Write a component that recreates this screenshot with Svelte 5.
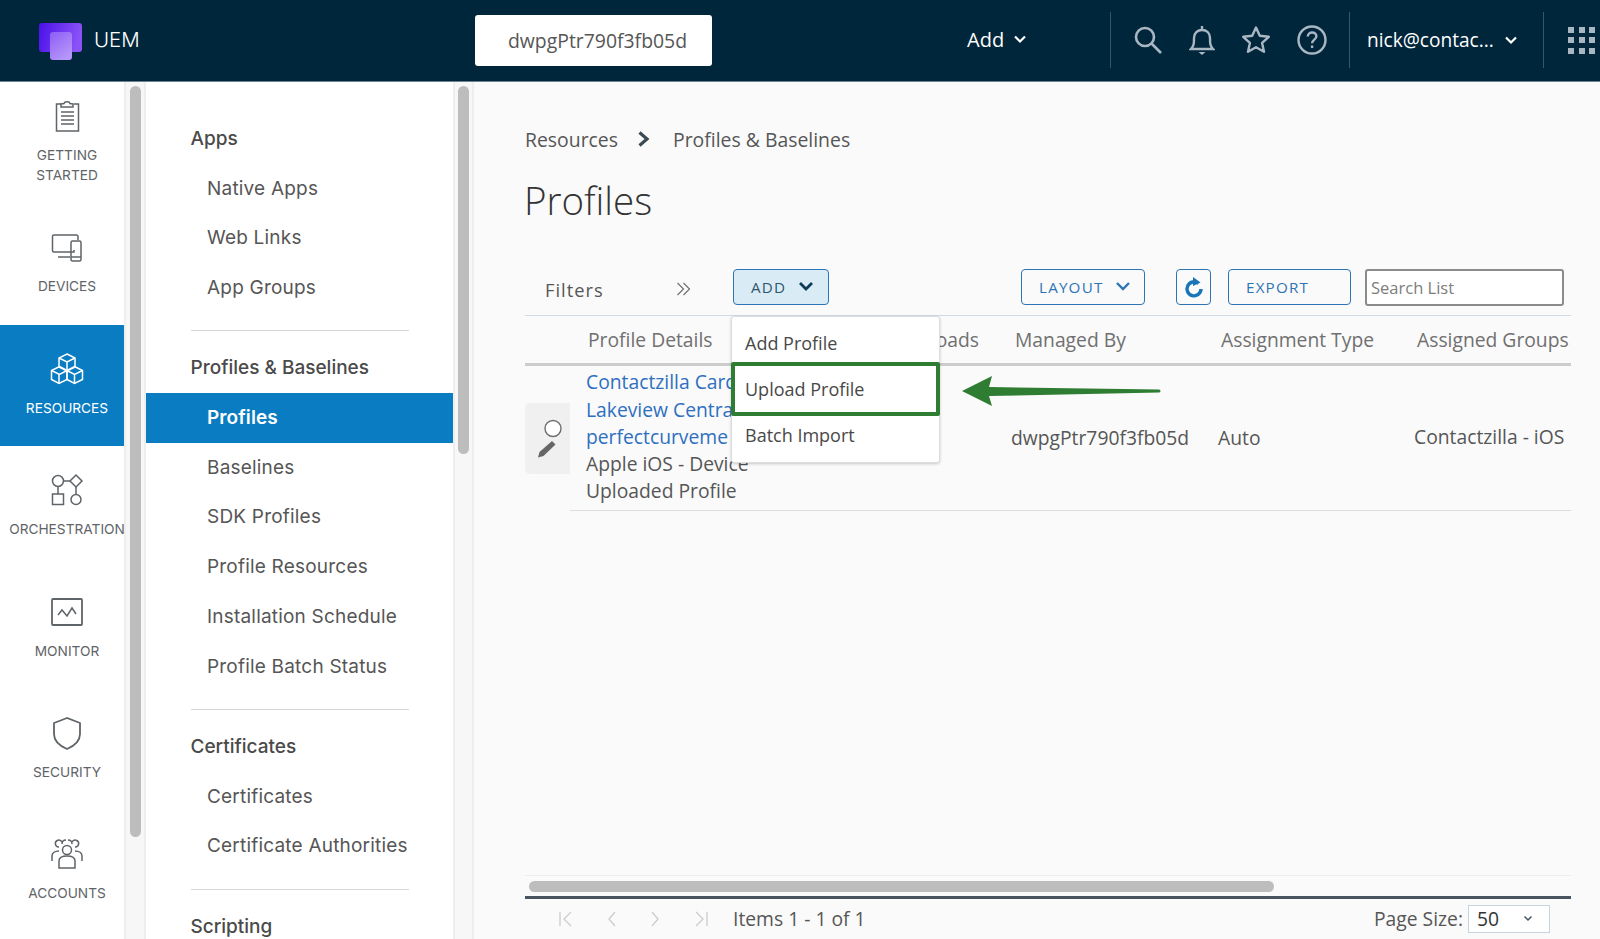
<script lang="ts">
const railItems = [
  { id: "start", label: ["GETTING", "STARTED"] },
  { id: "devices", label: ["DEVICES"] },
  { id: "resources", label: ["RESOURCES"], active: true },
  { id: "orchestration", label: ["ORCHESTRATION"] },
  { id: "monitor", label: ["MONITOR"] },
  { id: "security", label: ["SECURITY"] },
  { id: "accounts", label: ["ACCOUNTS"] }
];

const groups = [
  { title: "Apps", links: ["Native Apps", "Web Links", "App Groups"] },
  {
    title: "Profiles & Baselines",
    links: ["Profiles", "Baselines", "SDK Profiles", "Profile Resources", "Installation Schedule", "Profile Batch Status"]
  },
  { title: "Certificates", links: ["Certificates", "Certificate Authorities"] },
  { title: "Scripting", links: [] }
];
</script>

<div class="app">
  <header class="topbar">
    <div class="brand">
      <svg class="logo" width="44" height="38" viewBox="0 0 44 38">
        <defs>
          <linearGradient id="lg1" x1="0" y1="0" x2="1" y2="0.2">
            <stop offset="0" stop-color="#4a10e8" />
            <stop offset="1" stop-color="#8a52f7" />
          </linearGradient>
          <linearGradient id="lg2" x1="0" y1="0" x2="0.6" y2="1">
            <stop offset="0" stop-color="#8f5cf6" />
            <stop offset="1" stop-color="#b596fa" />
          </linearGradient>
        </defs>
        <rect x="0" y="0" width="43" height="29" rx="3" fill="url(#lg1)" />
        <rect x="11" y="9" width="22" height="28" rx="3" fill="url(#lg2)" />
      </svg>
      <span class="uem">UEM</span>
    </div>
    <div class="org">dwpgPtr790f3fb05d</div>
    <div class="add-menu">
      Add
      <svg width="14" height="10" viewBox="0 0 14 10" fill="none" stroke="#fff" stroke-width="2.2"><path d="M2 2.5l5 5 5-5" /></svg>
    </div>
    <div class="top-right">
      <div class="sep"></div>
      <div class="top-icons">
        <svg width="30" height="30" viewBox="0 0 30 30" fill="none" stroke="#a9b7c2" stroke-width="2.6"><circle cx="12" cy="12" r="9" /><path d="M18.5 18.5L28 28" /></svg>
        <svg width="26" height="32" viewBox="0 0 26 32" fill="none" stroke="#a9b7c2" stroke-width="2.4"><path d="M2 25c3-3 3-6 3-11 0-5 3.500-8 8-8s8 3 8 8c0 5 0 8 3 11z" /><path d="M13 2v4" /><path d="M9.500 28h7l-3.500 3z" fill="#a9b7c2" stroke="none" /></svg>
        <svg width="30" height="30" viewBox="0 0 30 30" fill="none" stroke="#a9b7c2" stroke-width="2.4" stroke-linejoin="round"><path d="M15 2.500l3.800 8.300 9 1-6.700 6.100 1.900 8.900L15 22.300l-8 4.500 1.900-8.900-6.700-6.100 9-1z" /></svg>
        <svg width="30" height="30" viewBox="0 0 30 30" fill="none" stroke="#a9b7c2" stroke-width="2.4"><circle cx="15" cy="15" r="13.500" /><path d="M10.800 11.500c0-2.500 2-4 4.300-4s4.300 1.500 4.300 3.800c0 3.400-4.300 3.400-4.300 7" /><path d="M15.100 20.500v2.500" /></svg>
      </div>
      <div class="sep"></div>
      <div class="user">
        nick@contac...
        <svg width="14" height="10" viewBox="0 0 14 10" fill="none" stroke="#fff" stroke-width="2.2"><path d="M2 2.500l5 5 5-5" /></svg>
      </div>
      <div class="sep"></div>
      <div class="apps-grid">
        {#each Array(9) as _}<span></span>{/each}
      </div>
    </div>
  </header>

  <div class="body">
    <nav class="rail">
      {#each railItems as item (item.id)}
        <div class="rail-item" class:active={item.active}>
          <svg class="rail-icon" width="34" height="34" viewBox="0 0 34 34" fill="none" stroke="currentColor" stroke-width="1.5">
            {#if item.id === "start"}
              <path d="M11 5H6.500v27h22V5H24" />
              <path d="M11 8V5l3-.5c.5-2.500 5.500-2.500 6 0l3 .5v3z" />
              <path d="M11 13h13M11 17h13M11 21h13M11 25h13" stroke-width="1.700" />
            {:else if item.id === "devices"}
              <path d="M24 20V22H4a1.500 1.500 0 0 1-1.500-1.500V6.500A1.500 1.500 0 0 1 4 5h22.500A1.500 1.500 0 0 1 28 6.500V10" />
              <path d="M8 27h12" />
              <rect x="21" y="11" width="10" height="20" rx="1.500" />
              <path d="M21 27h10" />
            {:else if item.id === "resources"}
              <path d="M17 2l8 4v9l-8 4-8-4V6z" />
              <path d="M9 6l8 4 8-4M17 10v9" />
              <path d="M9.500 14.500l7.500 4v9l-8 4-7.500-4v-9z" />
              <path d="M1.500 18.500l8 4 7.500-4M9 22.500v9" />
              <path d="M24.500 14.500l8 4v9l-8 4-7.500-4v-9z" />
              <path d="M17 18.500l7.500 4 8-4M24.500 22.500v9" />
            {:else if item.id === "orchestration"}
              <circle cx="8" cy="8" r="5.500" />
              <path d="M26 2l6 6-6 6-6-6z" />
              <rect x="2.500" y="21" width="11" height="10.500" />
              <circle cx="26" cy="26.500" r="5" />
              <path d="M13.500 8H20M8 13.500V21M26 14v7.500" />
            {:else if item.id === "monitor"}
              <rect x="2" y="4" width="30" height="26" rx="1" stroke-width="1.800" />
              <path d="M8 20l4-5 5 6 5-8 4 6" />
            {:else if item.id === "security"}
              <path d="M17 2L4 7v11c0 7 6 12 13 15 7-3 13-8 13-15V7z" stroke-width="1.800" />
            {:else}
              <circle cx="17" cy="13" r="4.500" />
              <path d="M9 31v-7c0-3 3-5 8-5s8 2 8 5v7z" />
              <path d="M12 7c0-3 2-4 4-4M22 7c0-3-2-4-4-4" />
              <path d="M9 10a3.500 3.500 0 1 1 3-5M25 10a3.500 3.500 0 1 0-3-5" />
              <path d="M2 24v-5c0-3 3-5 7-5M32 24v-5c0-3-3-5-7-5" />
            {/if}
          </svg>
          <div class="rail-label">
            {#each item.label as line}<div>{line}</div>{/each}
          </div>
        </div>
      {/each}
    </nav>
    <div class="gutter wide"><div class="thumb rail-thumb"></div></div>

    <aside class="sidebar">
      {#each groups as group, i}
        {#if i > 0}<hr />{/if}
        <h3>{group.title}</h3>
        {#each group.links as link}
          <div class="side-link" class:active={link === "Profiles"}>{link}</div>
        {/each}
      {/each}
    </aside>
    <div class="gutter"><div class="thumb side-thumb"></div></div>

    <main class="main">
      <div class="crumbs">
        <span>Resources</span>
        <svg width="14" height="18" viewBox="0 0 14 18" fill="none" stroke="#3c4a54" stroke-width="3.200"><path d="M2.500 2.500L10 9l-7.500 6.500" /></svg>
        <span class="crumb-last">Profiles &amp; Baselines</span>
      </div>
      <h1>Profiles</h1>

      <div class="toolbar">
        <div class="filters">Filters</div>
        <svg class="dbl" width="15" height="14" viewBox="0 0 15 14" fill="none" stroke="#707070" stroke-width="1.200"><path d="M1.500 1l6 6-6 6M7.500 1l6 6-6 6" /></svg>
        <div class="add-wrap">
          <button class="btn add">
            ADD
            <svg width="16" height="11" viewBox="0 0 16 11" fill="none" stroke="#0d3a55" stroke-width="2.800"><path d="M2 2l6 6 6-6" /></svg>
          </button>
          <div class="menu">
            <div class="menu-item">Add Profile</div>
            <div class="menu-item picked">Upload Profile</div>
            <div class="menu-item">Batch Import</div>
          </div>
        </div>
        <button class="btn layout">
          LAYOUT
          <svg width="16" height="11" viewBox="0 0 16 11" fill="none" stroke="#2d74b5" stroke-width="2.400"><path d="M2 2l6 6 6-6" /></svg>
        </button>
        <button class="btn refresh" aria-label="Refresh">
          <svg width="20" height="24" viewBox="0 0 20 24" fill="none" stroke="#1a75b8" stroke-width="3.400"><path d="M14.500 8.500a7 7 0 1 0 2.500 5.500" /><path d="M9 2l7.500 5.500L9 11z" fill="#1a75b8" stroke="none" /></svg>
        </button>
        <button class="btn export">EXPORT</button>
        <div class="search">Search List</div>
      </div>

      <div class="thead">
        <div></div>
        <div>Profile Details</div>
        <div class="right">Payloads</div>
        <div class="off">Managed By</div>
        <div class="off">Assignment Type</div>
        <div class="off">Assigned Groups</div>
      </div>

      <div class="row">
        <div class="tile">
          <svg width="30" height="42" viewBox="0 0 30 42" fill="none">
            <circle cx="20" cy="11.500" r="8" fill="#fff" stroke="#6e6e6e" stroke-width="1.400" />
            <path d="M19 24l3.500 3.500-12 11.500-5.500 1.500 1.500-5.500z" fill="#666" />
          </svg>
        </div>
        <div class="details">
          <div class="lnk">Contactzilla Card</div>
          <div class="lnk">Lakeview Central</div>
          <div class="lnk">perfectcurveme</div>
          <div>Apple iOS - Device</div>
          <div>Uploaded Profile</div>
        </div>
        <div></div>
        <div class="mid">dwpgPtr790f3fb05d</div>
        <div class="mid">Auto</div>
        <div class="mid up">Contactzilla - iOS</div>
      </div>

      <div class="spacer"></div>

      <div class="hscroll"><div class="thumb hthumb"></div></div>

      <footer class="pager">
        <div class="pages">
          <svg width="16" height="16" viewBox="0 0 16 16" fill="none" stroke="#c9cdd0" stroke-width="1.300"><path d="M2 1v14M13 1l-7 7 7 7" /></svg>
          <svg width="10" height="16" viewBox="0 0 10 16" fill="none" stroke="#c9cdd0" stroke-width="1.300"><path d="M8 1L2 8l6 7" /></svg>
          <svg width="10" height="16" viewBox="0 0 10 16" fill="none" stroke="#c9cdd0" stroke-width="1.300"><path d="M2 1l6 7-6 7" /></svg>
          <svg width="16" height="16" viewBox="0 0 16 16" fill="none" stroke="#c9cdd0" stroke-width="1.300"><path d="M14 1v14M3 1l7 7-7 7" /></svg>
        </div>
        <span class="items">Items 1 - 1 of 1</span>
        <span class="size-label">Page Size:</span>
        <div class="size">
          50
          <svg width="10" height="7" viewBox="0 0 10 7" fill="none" stroke="#44525c" stroke-width="1.500"><path d="M1.500 1.500L5 5l3.500-3.500" /></svg>
        </div>
      </footer>

      <svg class="arrow" width="200" height="32" viewBox="0 0 200 32">
        <path d="M0 16L30 1l-3 11 170 2.500a1.500 1.500 0 0 1 0 3L27 21l3 10z" fill="#2f7d32" />
      </svg>
    </main>
  </div>
</div>

<style>
  :global(body) {
    margin: 0;
    background: #fafafa;
  }

  .app {
    width: 1600px;
    height: 939px;
    overflow: hidden;
    display: flex;
    flex-direction: column;
    font-family: "Open Sans", "Noto Sans", sans-serif;
    color: #565656;
  }

  .topbar {
    height: 82px;
    flex: none;
    box-sizing: border-box;
    padding-bottom: 1px;
    border-bottom: 1px solid #6d8290;
    background: #00263b;
    display: flex;
    align-items: center;
    color: #fff;
    font-size: 20px;
  }

  .brand {
    width: 475px;
    flex: none;
    padding-left: 39px;
    box-sizing: border-box;
    display: flex;
    align-items: center;
    gap: 11px;
  }

  .logo {
    margin-top: 3px;
  }

  .uem {
    margin-bottom: 1px;
    font-family: Inter, sans-serif;
    font-size: 20.500px;
    font-weight: 300;
  }

  .org {
    width: 237px;
    height: 51px;
    flex: none;
    box-sizing: border-box;
    padding-left: 8px;
    background: #fff;
    border-radius: 3px;
    color: #565656;
    display: flex;
    align-items: center;
    justify-content: center;
    font-size: 19.400px;
  }

  .add-menu {
    margin: 0 0 2px 255px;
    display: flex;
    align-items: center;
    gap: 9px;
  }

  .top-right {
    margin-left: auto;
    display: flex;
    align-items: center;
    height: 100%;
  }

  .sep {
    width: 1px;
    height: 56px;
    background: #3a5566;
  }

  .top-icons {
    display: flex;
    align-items: center;
    gap: 26px;
    padding: 0 22px;
  }

  .user {
    width: 193px;
    box-sizing: border-box;
    padding-left: 17px;
    font-size: 19.100px;
    display: flex;
    align-items: center;
    gap: 10px;
  }

  .apps-grid {
    width: 28px;
    margin: 0 4px 0 24px;
    display: grid;
    grid-template-columns: repeat(3, 6px);
    gap: 4.5px;
  }

  .apps-grid span {
    height: 6px;
    background: #a9b7c2;
  }

  .body {
    flex: 1;
    min-height: 0;
    display: flex;
  }

  .rail {
    width: 124px;
    flex: none;
    background: #fff;
  }

  .rail-item {
    height: 121.400px;
    box-sizing: border-box;
    padding: 0 0 1px 10px;
    display: flex;
    flex-direction: column;
    align-items: center;
    justify-content: center;
    gap: 13px;
    color: #5f6468;
  }

  .rail-item.active {
    background: #0a7cc1;
    color: #fff;
  }

  .rail-label {
    font-family: Inter, sans-serif;
    font-size: 13.700px;
    line-height: 19.500px;
    text-align: center;
    white-space: nowrap;
  }

  .gutter {
    width: 21px;
    flex: none;
    box-sizing: border-box;
    padding-top: 4px;
    background: #f7f7f7;
    border-left: 2px solid #eee;
    border-right: 2px solid #eee;
    display: flex;
    justify-content: center;
  }

  .gutter.wide {
    width: 22px;
  }

  .thumb {
    width: 11px;
    border-radius: 6px;
    background: #bdbdbd;
  }

  .rail-thumb {
    height: 751px;
  }

  .side-thumb {
    height: 368px;
  }

  .sidebar {
    width: 307px;
    flex: none;
    box-sizing: border-box;
    padding-top: 32px;
    background: #fff;
    font-family: Inter, sans-serif;
    color: #565656;
    font-size: 19px;
  }

  .sidebar h3 {
    margin: 0 0 0 44.500px;
    height: 49.500px;
    line-height: 49.500px;
    font-size: 19px;
    font-weight: 500;
    color: #4a4a4a;
  }

  .sidebar hr {
    margin: 17.500px 45px 12px 45px;
    width: 218px;
    border: none;
    border-top: 1px solid #d8d8d8;
  }

  .side-link {
    height: 49.800px;
    line-height: 49.800px;
    padding-left: 61px;
    letter-spacing: 0.200px;
    white-space: nowrap;
  }

  .side-link.active {
    background: #0a7cc1;
    color: #fff;
    font-weight: 600;
    letter-spacing: 0.100px;
  }

  .main {
    flex: 1;
    min-width: 0;
    position: relative;
    display: flex;
    flex-direction: column;
    padding: 0 29px 0 51px;
    background: #fafafa;
  }

  .crumbs {
    margin-top: 43px;
    height: 28px;
    display: flex;
    align-items: center;
    gap: 19px;
    font-size: 19.400px;
    color: #565656;
  }

  .crumb-last {
    margin-left: 3px;
  }

  h1 {
    margin: 16px 0 0 -1px;
    height: 62px;
    line-height: 62px;
    font-size: 38.500px;
    font-weight: 300;
    color: #333;
  }

  .toolbar {
    margin-top: 38px;
    height: 46px;
    display: flex;
    align-items: flex-start;
    border-bottom: 1px solid #cfdde3;
  }

  .filters {
    margin: 8px 0 0 20px;
    width: 131px;
    font-size: 18.300px;
    letter-spacing: 1px;
  }

  .dbl {
    margin-top: 13px;
  }

  .add-wrap {
    position: relative;
    margin-left: 42px;
  }

  .btn {
    height: 36px;
    box-sizing: border-box;
    border: 1.500px solid #2d74b5;
    border-radius: 4px;
    background: #fafafa;
    color: #2d74b5;
    font-family: inherit;
    font-size: 15.200px;
    letter-spacing: 1.200px;
    display: flex;
    align-items: center;
    padding: 0 17px 1px;
    gap: 12px;
  }

  .btn svg {
    flex: none;
  }

  .add {
    width: 96px;
    background: #d9ecf6;
    color: #30566e;
  }

  .layout {
    width: 124px;
    margin-left: 192px;
  }

  .refresh {
    width: 35px;
    margin-left: 31px;
    padding: 0;
    justify-content: center;
  }

  .export {
    width: 123px;
    margin-left: 17px;
  }

  .search {
    width: 199px;
    height: 37px;
    margin-left: 14px;
    box-sizing: border-box;
    border: 2px solid #8b8b8b;
    border-radius: 3px;
    background: #fff;
    padding-left: 4px;
    font-size: 16.500px;
    line-height: 34px;
    color: #7d7d7d;
  }

  .menu {
    position: absolute;
    z-index: 2;
    left: -2px;
    top: 47px;
    width: 209px;
    height: 147px;
    box-sizing: border-box;
    background: #fff;
    border: 1px solid #ddd;
    border-radius: 3px;
    box-shadow: 0 1px 3px rgba(0, 0, 0, 0.2);
    font-size: 18px;
    color: #484848;
  }

  .menu-item {
    height: 46px;
    line-height: 46px;
    padding-left: 13px;
  }

  .menu-item:first-child {
    height: 45px;
    line-height: 52px;
  }

  .menu-item.picked {
    height: 54px;
    line-height: 46px;
    margin: 0 -1px;
    box-sizing: border-box;
    border: 4px solid #2f7d32;
    border-radius: 2px;
    padding-left: 10px;
  }

  .menu-item:last-child {
    line-height: 38px;
  }

  .thead,
  .row {
    display: grid;
    grid-template-columns: 45px 330px 110px 207px 197px 157px;
  }

  .thead {
    height: 47px;
    box-sizing: content-box;
    align-items: center;
    border-bottom: 3px solid #ccc;
    font-size: 19.300px;
    color: #707070;
    white-space: nowrap;
  }

  .thead > div {
    margin-bottom: 1px;
  }

  .thead > div:nth-child(2) {
    padding-left: 18px;
  }

  .thead .right {
    text-align: right;
    padding-right: 31px;
    overflow: hidden;
    direction: rtl;
  }

  .thead .off {
    padding-left: 5px;
  }

  .thead .off:nth-child(5) {
    padding-left: 4px;
  }

  .thead .off:nth-child(6) {
    padding-left: 3px;
  }

  .row {
    height: 145px;
    box-sizing: border-box;
    align-items: center;
    font-size: 19.300px;
    color: #565656;
    white-space: nowrap;
    background: linear-gradient(#ddd, #ddd) 45px 100% / 100% 1px no-repeat;
  }

  .tile {
    height: 71px;
    margin-bottom: 1px;
    background: #f0f0f0;
    border-radius: 5px 0 0 5px;
    display: flex;
    align-items: center;
    justify-content: center;
  }

  .details {
    padding-left: 16px;
    line-height: 27.300px;
    margin-bottom: 4px;
  }

  .lnk {
    color: #2e6fc0;
  }

  .mid {
    margin-top: -3px;
    padding-left: 1px;
  }

  .mid.up {
    margin-top: -5px;
    padding-left: 0;
  }

  .spacer {
    flex: 1;
  }

  .hscroll {
    height: 24px;
    flex: none;
    box-sizing: border-box;
    padding: 5px 0 0 4px;
    border-top: 1px solid #eee;
    border-bottom: 3px solid #48545f;
  }

  .hthumb {
    width: 745px;
    height: 11px;
  }

  .pager {
    height: 40px;
    flex: none;
    box-sizing: border-box;
    padding-bottom: 1px;
    display: flex;
    align-items: center;
    font-size: 19.300px;
    color: #565656;
  }

  .pages {
    margin-left: 33px;
    width: 175px;
    display: flex;
    align-items: center;
    gap: 33px;
  }

  .size-label {
    margin-left: auto;
    margin-right: 5px;
  }

  .size {
    width: 82px;
    height: 28px;
    margin-right: 21px;
    box-sizing: border-box;
    padding: 0 16px 0 8px;
    border: 1px solid #c5d5dc;
    background: #fff;
    color: #333;
    display: flex;
    align-items: center;
    justify-content: space-between;
  }

  .arrow {
    position: absolute;
    left: 488px;
    top: 293px;
  }
</style>
